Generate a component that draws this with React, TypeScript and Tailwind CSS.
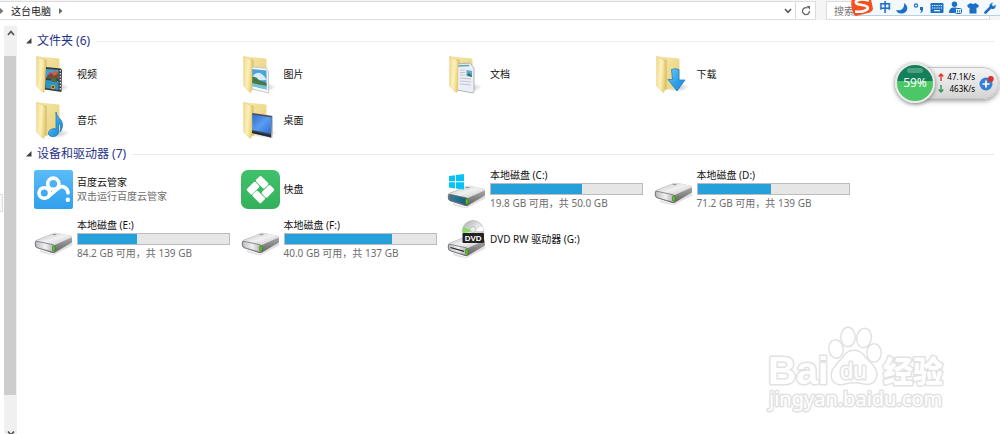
import type { ReactNode } from "react";

type Overlay = "video" | "picture" | "document" | "download" | "music" | "desktop";

const folders: { name: string; overlay: Overlay }[] = [
  { name: "视频", overlay: "video" },
  { name: "图片", overlay: "picture" },
  { name: "文档", overlay: "document" },
  { name: "下载", overlay: "download" },
  { name: "音乐", overlay: "music" },
  { name: "桌面", overlay: "desktop" },
];

function FolderOverlay({ kind }: { kind: Overlay }) {
  switch (kind) {
    case "video":
      return (
        <g>
          <path d="M12 13 L27 14.500 L28 16 L27.500 38 L11 35.500 Z" fill="#3a3d42" />
          <path d="M12 15 L24.500 16 L24.500 25 L11.500 24 Z" fill="#3fa3cf" />
          <path d="M11.500 26 L24.500 27 L24.500 36 L11.500 34 Z" fill="#2f93c4" />
          <path d="M13 22 L17 18 L20 22 L23 18 L24.500 20 V25 L12.500 24 Z" fill="#7c4a2c" />
          <circle cx="21" cy="19" r="2.200" fill="#e5582c" />
          <circle cx="16" cy="19" r="1.300" fill="#d8467c" />
          <path d="M17 25 L21 24 L23 28 L18 28 Z" fill="#3f7436" />
          <circle cx="19" cy="33" r="2.200" fill="#e6a12a" />
          <circle cx="19" cy="33" r="1" fill="#322" />
          <path d="M26.300 16 V37" stroke="#e6e6e6" strokeWidth="1.300" strokeDasharray="1.500 1.500" />
        </g>
      );
    case "picture":
      return (
        <g>
          <path d="M11 13 L25 14 L27.500 17 V39 L11 35 Z" fill="#f5f6f7" stroke="#b5b9bd" strokeWidth=".7" />
          <path d="M11 15 L25.500 16.500 V35.500 L11 32 Z" fill="#4ba2dc" />
          <path d="M12 22 Q17 15 24 23 L25.500 26 L11 27 Z" fill="#d4ecf8" />
          <path d="M11 23 Q15 22 18 26 L25.500 29 V32 L11 30 Z" fill="#47794a" />
          <path d="M11 29 L25.500 32 V35.500 L11 32 Z" fill="#79c3cf" />
        </g>
      );
    case "document":
      return (
        <g>
          <path d="M10 10 L23 9 L27 14 V38 L26 39 L10 36 Z" fill="#eceef5" stroke="#9ea3ad" strokeWidth=".8" />
          <path d="M11 12 L22 11.500" stroke="#56ada8" strokeWidth="1.300" />
          <path d="M13 16 H18 M13 18.500 H18 M13 21 H18 M13 24 L24 25 M13 27 L24 28 M13 30 L24 31" stroke="#b3bac8" strokeWidth=".8" />
          <path d="M19.500 16 L25 17 V23 L19.500 22 Z" fill="#59a8d0" />
          <path d="M20 21 L22 19 L25 22 V23 Z" fill="#34704f" />
        </g>
      );
    case "download":
      return (
        <path
          d="M17.500 15.500 Q21 14 25 15.500 V26 H31 L23 37 L14 25.500 H18.500 Z"
          fill="url(#blueFill)"
          stroke="#2380c2"
          strokeWidth=".8"
        />
      );
    case "music":
      return (
        <path
          d="M22 12 C23 18 29 19 28.500 26 C28 29 27 31 26 32 C27 26 26 24 24.500 23 V32 C24.500 38 14 38 14.500 33 C15 29 20 28 22 29 Z"
          fill="url(#blueFill)"
          stroke="#2678bb"
          strokeWidth=".8"
        />
      );
    case "desktop":
      return (
        <g>
          <path d="M11 13 L32 16 L31 38 L11 33 Z" fill="#454f5c" />
          <path d="M11 14.500 L30.500 17.500 L29.800 33.500 L11 30 Z" fill="url(#screen)" />
          <path d="M11 31 L30 35 V37 L11 33 Z" fill="#202a38" />
          <path d="M31.500 16 L30.800 38" stroke="#c3ccd6" strokeWidth="1.200" />
        </g>
      );
  }
}

function FolderIcon({ overlay }: { overlay: Overlay }) {
  return (
    <svg viewBox="0 0 40 40" className="size-10 shrink-0" aria-hidden="true">
      <path d="M10 38 L28 29 L36 32 L27 38 Z" fill="url(#softShadow)" />
      <path d="M5 2.500 L25 4.500 Q25.700 5 25.500 8 V33 L11 36 L5 30 Z" fill="url(#folderBack)" />
      <path d="M10 5 L13 6 V35 L10 37 Z" fill="#b99f4c" opacity=".35" />
      <FolderOverlay kind={overlay} />
      <path
        d="M2.700 2 L10 6 Q11 7 11 9 V27 L10 38.500 L8.500 38 L2.700 32 Z"
        fill="url(#folderFront)"
        stroke="#dfc575"
        strokeWidth=".5"
      />
    </svg>
  );
}

function DriveBody({ dark }: { dark?: boolean }) {
  return (
    <g>
      <path d="M6 34 L18 38 L37 27 L39 29 L20 39 Q14 39 6 36 Z" fill="#000" opacity=".12" />
      <path d="M.8 26 Q1 24.500 3 23.800 L19 17.300 Q21 16.600 23 17 L36 19.500 Q38 20 38 22 V26.500 L21 36.500 Q20 37.300 18 37 L3 32 Q.8 31 .8 29 Z" fill="url(#driveSide)" />
      <path d="M1.500 25 L19 17.300 Q21 16.600 23 17 L36 19.500 Q38 20 37.500 21.500 L22 28.500 Q20 29.300 18 29 Z" fill="url(#driveTop)" />
      <path d="M18 18.600 Q20.500 17.300 23 18.600 Q21 19.800 18 18.600 Z" fill="#8d8d8d" />
      <path
        d="M1.500 26 Q2 25.200 4 25.500 L19 28.700 Q21 29.400 21 31 V35 Q21 36.500 19 36.200 L4 32 Q1.500 31 1.500 29 Z"
        fill={dark ? "url(#driveTeal)" : "url(#driveFace)"}
        stroke="#777"
        strokeWidth=".8"
      />
      <rect x="18.500" y="30" width="2.600" height="5" rx=".8" fill="#55c51f" stroke="#31751a" strokeWidth=".5" />
    </g>
  );
}

function DriveIcon({ variant = "plain" }: { variant?: "plain" | "windows" | "dvd" }) {
  return (
    <svg viewBox="0 0 40 40" className="size-10 shrink-0" aria-hidden="true">
      <g transform={variant === "plain" ? "translate(0 -3)" : undefined}>
        <DriveBody dark={variant === "windows"} />
      </g>
      {variant === "windows" && (
        <path
          d="M2 7 L8 6.200 V12.300 H2 Z M9 6 L17 5 V12.300 H9 Z M2 13.300 H8 V19.400 L2 18.500 Z M9 13.300 H17 V20.500 L9 19.500 Z"
          fill="#05c4f5"
        />
      )}
      {variant === "dvd" && (
        <g>
          <path d="M3.500 28.500 L17 32.300" stroke="#222" strokeWidth="1.200" />
          <circle cx="26" cy="12" r="10.500" fill="url(#disc)" stroke="#aaa" strokeWidth=".6" />
          <path d="M26 12 L16 8 Q15.200 11 16 14 Z" fill="#7ee35c" />
          <path d="M26 12 L35 7 Q36.500 9 36.500 12 Z" fill="#fff" />
          <circle cx="26" cy="10.500" r="3" fill="#e9e9e9" stroke="#aaa" strokeWidth=".6" />
          <rect x="15.500" y="14" width="21.500" height="10" rx="1" fill="#222" />
          <text x="26.200" y="22" fontSize="8" fontWeight="700" fill="#fff" textAnchor="middle" fontFamily="Liberation Sans, sans-serif">
            DVD
          </text>
        </g>
      )}
    </svg>
  );
}

function CloudAppIcon() {
  return (
    <svg viewBox="0 0 40 40" className="size-10 shrink-0" aria-hidden="true">
      <rect x="0" y="1" width="39" height="39" rx="2.500" fill="url(#cloudBlue)" />
      <g fill="none" stroke="#fff" strokeWidth="3.600" strokeLinecap="round">
        <circle cx="19.300" cy="14.700" r="5.600" />
        <circle cx="10.300" cy="24" r="5.300" />
        <path d="M14 28 L24 19.500 Q27.500 16.500 31 18.500 Q34 20.500 34 24" />
      </g>
      <circle cx="33.800" cy="30.800" r="2.200" fill="#fff" />
    </svg>
  );
}

function KuaipanIcon() {
  return (
    <svg viewBox="0 0 40 40" className="size-10 shrink-0" aria-hidden="true">
      <rect x="0" y="1" width="39" height="39" rx="7" fill="url(#kpGreen)" />
      <g transform="rotate(45 19.500 20.500)" fill="#fff">
        <rect x="9.500" y="10.500" width="12" height="7.500" rx="1.500" />
        <rect x="22.300" y="10.500" width="7.500" height="12" rx="1.500" />
        <rect x="17.500" y="23.300" width="12" height="7.500" rx="1.500" />
        <rect x="9.500" y="18.800" width="7.500" height="12" rx="1.500" />
      </g>
    </svg>
  );
}

/** Gradients shared by all the tile icons. */
function IconDefs() {
  return (
    <svg className="absolute size-0" aria-hidden="true">
      <defs>
        <linearGradient id="folderFront" x1="0" x2="1" y1="0" y2=".3">
          <stop offset="0" stopColor="#f0dc8d" />
          <stop offset=".6" stopColor="#fcf1bd" />
          <stop offset="1" stopColor="#efd478" />
        </linearGradient>
        <linearGradient id="folderBack" x1="0" x2="1" y1="0" y2="1">
          <stop offset="0" stopColor="#f3e6a9" />
          <stop offset="1" stopColor="#ead17a" />
        </linearGradient>
        <radialGradient id="softShadow">
          <stop offset="0" stopColor="#888" stopOpacity=".5" />
          <stop offset="1" stopColor="#888" stopOpacity="0" />
        </radialGradient>
        <linearGradient id="blueFill" x1="0" x2="1" y1="0" y2="1">
          <stop offset="0" stopColor="#6cc8f7" />
          <stop offset=".6" stopColor="#2b9de6" />
          <stop offset="1" stopColor="#2382cd" />
        </linearGradient>
        <linearGradient id="screen" x1="0" x2="1" y1="0" y2="1">
          <stop offset="0" stopColor="#2e6bcb" />
          <stop offset=".5" stopColor="#5a9cf1" />
          <stop offset="1" stopColor="#2b6fd8" />
        </linearGradient>
        <linearGradient id="driveTop" x1="0" x2="1" y1="0" y2="1">
          <stop offset="0" stopColor="#b9b9b9" />
          <stop offset=".5" stopColor="#f1f1f1" />
          <stop offset="1" stopColor="#c2c2c2" />
        </linearGradient>
        <linearGradient id="driveSide" x1="0" x2="0" y1="0" y2="1">
          <stop offset="0" stopColor="#bdbdbd" />
          <stop offset="1" stopColor="#606060" />
        </linearGradient>
        <linearGradient id="driveFace" x1="0" x2="1" y1="0" y2="0">
          <stop offset="0" stopColor="#bcbcbf" />
          <stop offset=".5" stopColor="#f0f0f5" />
          <stop offset="1" stopColor="#a5a5a8" />
        </linearGradient>
        <linearGradient id="driveTeal" x1="0" x2="1" y1="0" y2="0">
          <stop offset="0" stopColor="#4b7587" />
          <stop offset=".5" stopColor="#1d6f96" />
          <stop offset="1" stopColor="#29525d" />
        </linearGradient>
        <linearGradient id="disc" x1="0" x2="1" y1="0" y2="1">
          <stop offset="0" stopColor="#a9a9a9" />
          <stop offset=".5" stopColor="#e8e8e8" />
          <stop offset="1" stopColor="#aaa" />
        </linearGradient>
        <linearGradient id="cloudBlue" x1="0" x2="0" y1="0" y2="1">
          <stop offset="0" stopColor="#5bbcf8" />
          <stop offset="1" stopColor="#309fec" />
        </linearGradient>
        <linearGradient id="kpGreen" x1="0" x2="0" y1="0" y2="1">
          <stop offset="0" stopColor="#41c16b" />
          <stop offset="1" stopColor="#33b05c" />
        </linearGradient>
      </defs>
    </svg>
  );
}

function Group({ title, children }: { title: string; children: ReactNode }) {
  return (
    <section>
      <div className="flex h-5 items-center pr-[6px] pl-[9px]">
        <svg viewBox="0 0 6 6" className="size-[6px]" aria-hidden="true">
          <path d="M5.500 0 V5.500 H0 Z" fill="#404040" />
        </svg>
        <h2 className="ml-[5px] text-[12px] leading-5 text-[#1e3287]">{title}</h2>
        <div className="ml-[6px] h-px flex-1 bg-[#ebebeb]" />
      </div>
      <div className="ml-[17px] grid max-w-[826px] grid-cols-4">{children}</div>
    </section>
  );
}

function FolderTile({ name, overlay }: { name: string; overlay: Overlay }) {
  return (
    <div className="flex h-[46px] items-center gap-[3px]">
      <FolderIcon overlay={overlay} />
      <span>{name}</span>
    </div>
  );
}

function AppTile({ icon, name, note }: { icon: ReactNode; name: string; note?: string }) {
  return (
    <div className="flex h-[50px] items-center gap-[3px]">
      {icon}
      <div className="leading-[14px]">
        <div>{name}</div>
        {note && <div className="text-[#6d6d6d]">{note}</div>}
      </div>
    </div>
  );
}

function DriveTile({
  name,
  used,
  note,
  windows,
}: {
  name: string;
  used: number;
  note: string;
  windows?: boolean;
}) {
  return (
    <div className="flex h-[50px] items-center gap-[3px]">
      <DriveIcon variant={windows ? "windows" : "plain"} />
      <div className="w-[153px] leading-[14px]">
        <div>{name}</div>
        <div
          role="progressbar"
          aria-label={name}
          aria-valuenow={used}
          className="my-px h-3 border border-[#bcbcbc] bg-[#e6e6e6]"
        >
          <div className="h-full bg-[#26a0da]" style={{ width: `${used}%` }} />
        </div>
        <div className="whitespace-nowrap text-[#6d6d6d]">{note}</div>
      </div>
    </div>
  );
}

function AddressBar() {
  return (
    <header className="flex h-5 gap-[10px] bg-[#f5f5f5] pt-px pr-[10px] text-[#222]">
      <div className="flex flex-1 border border-l-0 border-[#dcdcdc] bg-white">
        <nav className="flex flex-1 items-center">
          <svg viewBox="0 0 4 6" className="h-[6px] w-1" aria-hidden="true">
            <path d="M0 0 L3.500 3 L0 6 Z" fill="#777" />
          </svg>
          <a href="#" className="ml-[7px]">这台电脑</a>
          <svg viewBox="0 0 4 6" className="ml-2 h-[6px] w-1" aria-hidden="true">
            <path d="M0 0 L3.500 3 L0 6 Z" fill="#666" />
          </svg>
        </nav>
        <button type="button" aria-label="历史记录" className="flex w-[15px] items-center justify-center">
          <svg viewBox="0 0 8 6" className="h-[6px] w-2">
            <path d="M1 1 L4 4.300 L7 1" fill="none" stroke="#555" strokeWidth="1.500" />
          </svg>
        </button>
        <button
          type="button"
          aria-label="刷新"
          className="flex w-5 items-center justify-center border-l border-[#dcdcdc]"
        >
          <svg viewBox="0 0 10 10" className="size-[10px]">
            <path d="M6.500 1.900 A3.500 3.500 0 1 0 8.500 5" fill="none" stroke="#666" strokeWidth="1.300" />
            <path d="M5.500 0 H9 V3.800 Z" fill="#666" />
          </svg>
        </button>
      </div>
      <input
        type="search"
        aria-label="搜索"
        placeholder="搜索"
        className="w-[164px] border border-[#dcdcdc] bg-white pl-[7px] outline-none placeholder:text-[#777]"
      />
    </header>
  );
}

function InputMethodBar() {
  return (
    <div className="absolute top-0 right-0 flex h-4 items-center rounded-bl border-b border-[#b9cfe2] bg-linear-to-r from-transparent from-5% to-[#f4f9fd] to-5% pr-1 text-[#1b6fc4]">
      <svg viewBox="0 0 24 18" className="h-[18px] w-6" aria-hidden="true">
        <path d="M2 0 L20 -3 Q22 4 23 10 Q22 13 18 14 L6 17 Q4 17 3 14 Q0 6 2 0 Z" fill="#f4511e" />
        <path
          d="M19 1.500 Q9 -1 6 2.500 Q5 5.500 12 6 Q19 7 17.500 10 Q14 13.500 5 12.500"
          fill="none"
          stroke="#fff"
          strokeWidth="2.600"
        />
      </svg>
      <div className="ml-[5px] flex items-center gap-[5px]">
        <button type="button" className="w-3 text-[12px] leading-3 font-bold">中</button>
        <svg viewBox="0 0 12 12" className="size-3" aria-hidden="true">
          <path d="M8 1 C14 5 11 11.500 5 11.500 Q1.500 11.500 0 8 C5 9.500 9 6 8 1 Z" fill="currentColor" />
        </svg>
        <svg viewBox="0 0 12 12" className="size-3" aria-hidden="true">
          <circle cx="3" cy="3.500" r="1.600" fill="none" stroke="currentColor" strokeWidth="1.200" />
          <path d="M7 5 H10 V8 Q9.500 11 7 11.500 Q8.300 10 8 8 H7 Z" fill="currentColor" />
        </svg>
        <svg viewBox="0 0 14 12" className="h-3 w-[14px]" aria-hidden="true">
          <rect x=".5" y="1" width="13" height="10" rx="1" fill="currentColor" />
          <path d="M2 3.500 H12 M2 6 H12" stroke="#fff" strokeWidth="1.200" strokeDasharray="1.200 1" />
          <path d="M4 8.700 H10" stroke="#fff" strokeWidth="1.200" />
        </svg>
        <svg viewBox="0 0 13 13" className="size-[13px]" aria-hidden="true">
          <circle cx="5.500" cy="3.200" r="2.700" fill="currentColor" />
          <path d="M0 12 Q0 7 4 6.500 H7 Q9 7 9.500 8 H6.500 V12 Z" fill="currentColor" />
          <rect x="6.500" y="7.500" width="6" height="5" rx="1" fill="#f4f9fd" stroke="currentColor" />
          <path d="M8.500 9 V11.500 M10.700 9 V11.500" stroke="currentColor" />
        </svg>
        <svg viewBox="0 0 12 12" className="size-3" aria-hidden="true">
          <path d="M3.500 1 Q6 3 8.500 1 L12 3.500 L10.500 6 L9.500 5.500 V11.500 H2.500 V5.500 L1.500 6 L0 3.500 Z" fill="currentColor" />
        </svg>
        <svg viewBox="0 0 12 12" className="size-3" aria-hidden="true">
          <path d="M1.500 10.500 L7 5" stroke="currentColor" strokeWidth="2.600" strokeLinecap="round" />
          <path d="M9.500 .5 L7.500 2.500 L9.500 4.500 L11.500 2.500 Q12.300 6 9.500 7 Q6.500 7.500 5.500 5 Q5 1 9.500 .5 Z" fill="currentColor" />
        </svg>
      </div>
    </div>
  );
}

function SpeedWidget() {
  return (
    <div className="absolute top-[63px] right-px flex items-center">
      <div className="relative z-10 flex size-10 items-center justify-center rounded-full border-2 border-[#e9e9e9] bg-linear-to-b from-[#14805a] from-44% to-[#4cc768] to-44% text-[12px] text-white shadow-[0_1px_4px_#777]">
        <span className="absolute top-[3px] h-[5px] w-4 rounded-full bg-white/25" />
        59%
      </div>
      <div className="-ml-5 flex h-8 items-center rounded-r-full border border-[#c8c8c8] bg-linear-to-b from-[#f4f4f4] to-[#d5d5d5] pr-1 pl-[22px] shadow-[0_2px_5px_#999]">
        <div className="w-[37px] text-[8px] leading-3 text-black">
          <div className="flex items-center justify-between">
            <svg viewBox="0 0 6 8" className="h-2 w-[6px]" aria-hidden="true">
              <path d="M3 8 V2 M.7 3.500 L3 1 L5.300 3.500" fill="none" stroke="#dd3b2a" strokeWidth="1.400" />
            </svg>
            <span>47.1K/s</span>
          </div>
          <div className="flex items-center justify-between">
            <svg viewBox="0 0 6 8" className="h-2 w-[6px]" aria-hidden="true">
              <path d="M3 0 V6 M.7 4.500 L3 7 L5.300 4.500" fill="none" stroke="#2f9b52" strokeWidth="1.400" />
            </svg>
            <span>463K/s</span>
          </div>
        </div>
        <button type="button" aria-label="加速" className="ml-1">
          <svg viewBox="0 0 15 16" className="h-4 w-[15px]">
            <circle cx="7" cy="9" r="6.500" fill="#3580d4" />
            <path d="M7 5.500 V12.500 M3.500 9 H10.500" stroke="#fff" strokeWidth="1.700" />
            <circle cx="11.800" cy="4" r="2.900" fill="#d92f2f" />
          </svg>
        </button>
      </div>
    </div>
  );
}

function Watermark() {
  return (
    <svg
      viewBox="0 0 190 94"
      className="pointer-events-none absolute right-[54px] bottom-[16px] h-[94px] w-[190px]"
      role="img"
      aria-label="Baidu 经验"
    >
      <g fill="#fff" stroke="#e2e2e2" strokeWidth="3" paintOrder="stroke" strokeLinejoin="round">
        <text x="12" y="60" fontSize="39" fontWeight="700" fontFamily="Liberation Sans, sans-serif">
          Bai
        </text>
        <ellipse cx="92" cy="13" rx="6.500" ry="9" />
        <ellipse cx="108" cy="14" rx="6.500" ry="9" transform="rotate(10 108 14)" />
        <ellipse cx="80" cy="25" rx="6.500" ry="8.500" transform="rotate(-8 80 25)" />
        <ellipse cx="118" cy="29" rx="6.500" ry="8.500" />
        <path d="M98 27 Q105 27 109 34 L117 42 Q123 50 118 57 Q114 61 107 59 Q98 57 90 59 Q81 62 77 56 Q74 49 80 42 L87 34 Q91 27 98 27 Z" />
        <text x="84" y="55" fontSize="24" fontFamily="Liberation Sans, sans-serif">
          du
        </text>
        <text x="127" y="58" fontSize="30" fontWeight="900" fontFamily="Noto Sans CJK SC, sans-serif">
          经验
        </text>
        <text x="13" y="82" fontSize="20" fontFamily="Noto Sans, sans-serif">
          jingyan.baidu.com
        </text>
      </g>
    </svg>
  );
}

export default function App() {
  return (
    <div className="relative flex min-h-screen flex-col overflow-hidden bg-white font-['Noto_Sans','Noto_Sans_CJK_SC',sans-serif] text-[10px] leading-4 text-[#111]">
      <IconDefs />
      <AddressBar />
      <div className="flex flex-1 pt-[6px]">
        {/* sliver of the collapsed navigation pane */}
        <div className="w-1 pt-[168px]">
          <div className="h-[18px] w-[3px] border border-l-0 border-[#ddd] bg-[#f7f7f7]" />
        </div>
        <div className="flex w-[13px] flex-col bg-[#f0f0f0]">
          <button type="button" aria-label="向上滚动" className="flex h-[30px] justify-center pt-1">
            <svg viewBox="0 0 8 6" className="h-[6px] w-2">
              <path d="M1 5 L4 1.500 L7 5" fill="none" stroke="#555" strokeWidth="1.700" />
            </svg>
          </button>
          <div className="mr-px flex-1 bg-[#cdcdcd]" />
          <button type="button" aria-label="向下滚动" className="flex h-[39px] items-end justify-center">
            <svg viewBox="0 0 8 3" className="h-[3px] w-2">
              <path d="M1 .5 L4 4 L7 .5" fill="none" stroke="#555" strokeWidth="1.700" />
            </svg>
          </button>
        </div>
        <main className="flex flex-1 flex-col gap-px pt-[5px]">
          <Group title="文件夹 (6)">
            {folders.map((f) => (
              <FolderTile key={f.name} name={f.name} overlay={f.overlay} />
            ))}
          </Group>
          <Group title="设备和驱动器 (7)">
            <AppTile icon={<CloudAppIcon />} name="百度云管家" note="双击运行百度云管家" />
            <AppTile icon={<KuaipanIcon />} name="快盘" />
            <DriveTile name="本地磁盘 (C:)" used={60} note="19.8 GB 可用，共 50.0 GB" windows />
            <DriveTile name="本地磁盘 (D:)" used={49} note="71.2 GB 可用，共 139 GB" />
            <DriveTile name="本地磁盘 (E:)" used={39} note="84.2 GB 可用，共 139 GB" />
            <DriveTile name="本地磁盘 (F:)" used={71} note="40.0 GB 可用，共 137 GB" />
            <AppTile icon={<DriveIcon variant="dvd" />} name="DVD RW 驱动器 (G:)" />
          </Group>
        </main>
      </div>
      <InputMethodBar />
      <SpeedWidget />
      <Watermark />
    </div>
  );
}
